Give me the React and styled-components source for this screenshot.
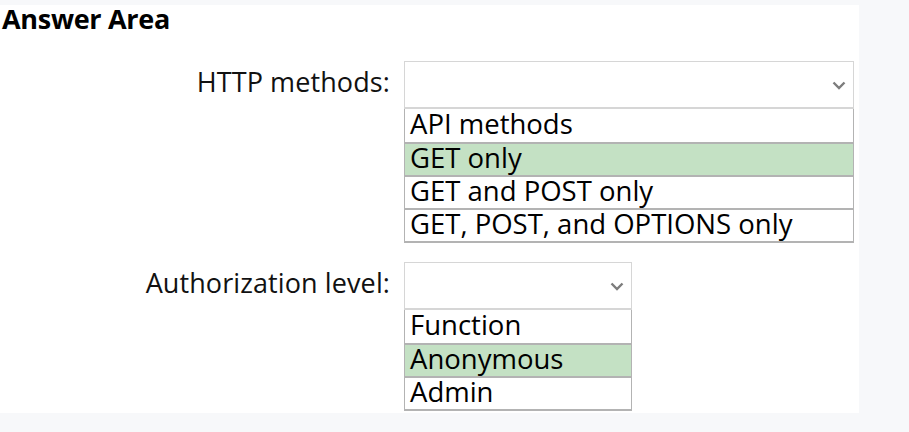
import React from "react";
import styled, { createGlobalStyle } from "styled-components";

const GlobalStyle = createGlobalStyle`
  html, body {
    margin: 0;
    padding: 0;
    background: #f7f8fa;
  }
  body {
    font-family: "Open Sans", "Noto Sans", "Liberation Sans", sans-serif;
    color: #000;
  }
`;

const questions = [
  {
    label: "HTTP methods:",
    width: 450,
    options: ["API methods", "GET only", "GET and POST only", "GET, POST, and OPTIONS only"],
    answer: 1,
  },
  {
    label: "Authorization level:",
    width: 228,
    options: ["Function", "Anonymous", "Admin"],
    answer: 1,
  },
];

const Chevron = () => (
  <svg width="14" height="9" viewBox="0 0 14 9" fill="none">
    <path d="M1.5 1.5 L7 7 L12.5 1.5" stroke="#7d7d7d" strokeWidth="2.4" />
  </svg>
);

const App = () => {
  return (
    <>
      <GlobalStyle />
      <Panel>
        <Title>Answer Area</Title>
        <Form>
          {questions.map((q) => (
            <Row key={q.label}>
              <Label>{q.label}</Label>
              <Dropdown $width={q.width}>
                <SelectBox>
                  <Chevron />
                </SelectBox>
                <OptionList>
                  {q.options.map((o, i) => (
                    <Option key={o} $selected={i === q.answer}>
                      {o}
                    </Option>
                  ))}
                </OptionList>
              </Dropdown>
            </Row>
          ))}
        </Form>
      </Panel>
    </>
  );
};

export default App;

const Panel = styled.div`
  width: 859px;
  height: 408px;
  margin-top: 5px;
  background: #fff;
  box-sizing: border-box;
  padding: 3px 0 0 2px;
`;

const Title = styled.h1`
  margin: 0;
  font-size: 27px;
  font-weight: 700;
  line-height: 22px;
  letter-spacing: -0.3px;
`;

const Form = styled.div`
  display: flex;
  flex-direction: column;
  gap: 19px;
  margin-top: 31px;
`;

const Row = styled.div`
  display: grid;
  grid-template-columns: 388px auto;
  column-gap: 14px;
  align-items: start;
`;

const Label = styled.div`
  text-align: right;
  font-size: 27px;
  line-height: 42px;
  letter-spacing: 0.1px;
  color: #111;
`;

const Dropdown = styled.div`
  width: ${({ $width }) => $width}px;
  display: flex;
  flex-direction: column;
`;

const SelectBox = styled.div`
  height: 48px;
  box-sizing: border-box;
  border: 1px solid #d6d6d6;
  border-bottom: 2px solid #d6d6d6;
  display: flex;
  align-items: center;
  justify-content: flex-end;
  padding: 2px 7px 0 0;
`;

const OptionList = styled.div`
  border: 1px solid #b3b3b3;
  border-top: none;
  border-bottom: 2px solid #b3b3b3;
`;

const Option = styled.div`
  height: 33px;
  box-sizing: border-box;
  line-height: 29px;
  padding-left: 5px;
  font-size: 27.5px;
  white-space: nowrap;
  background: ${({ $selected }) => ($selected ? "#c4e1c4" : "#fff")};
  & + & {
    border-top: 2px solid #b3b3b3;
    line-height: 27px;
  }
`;
